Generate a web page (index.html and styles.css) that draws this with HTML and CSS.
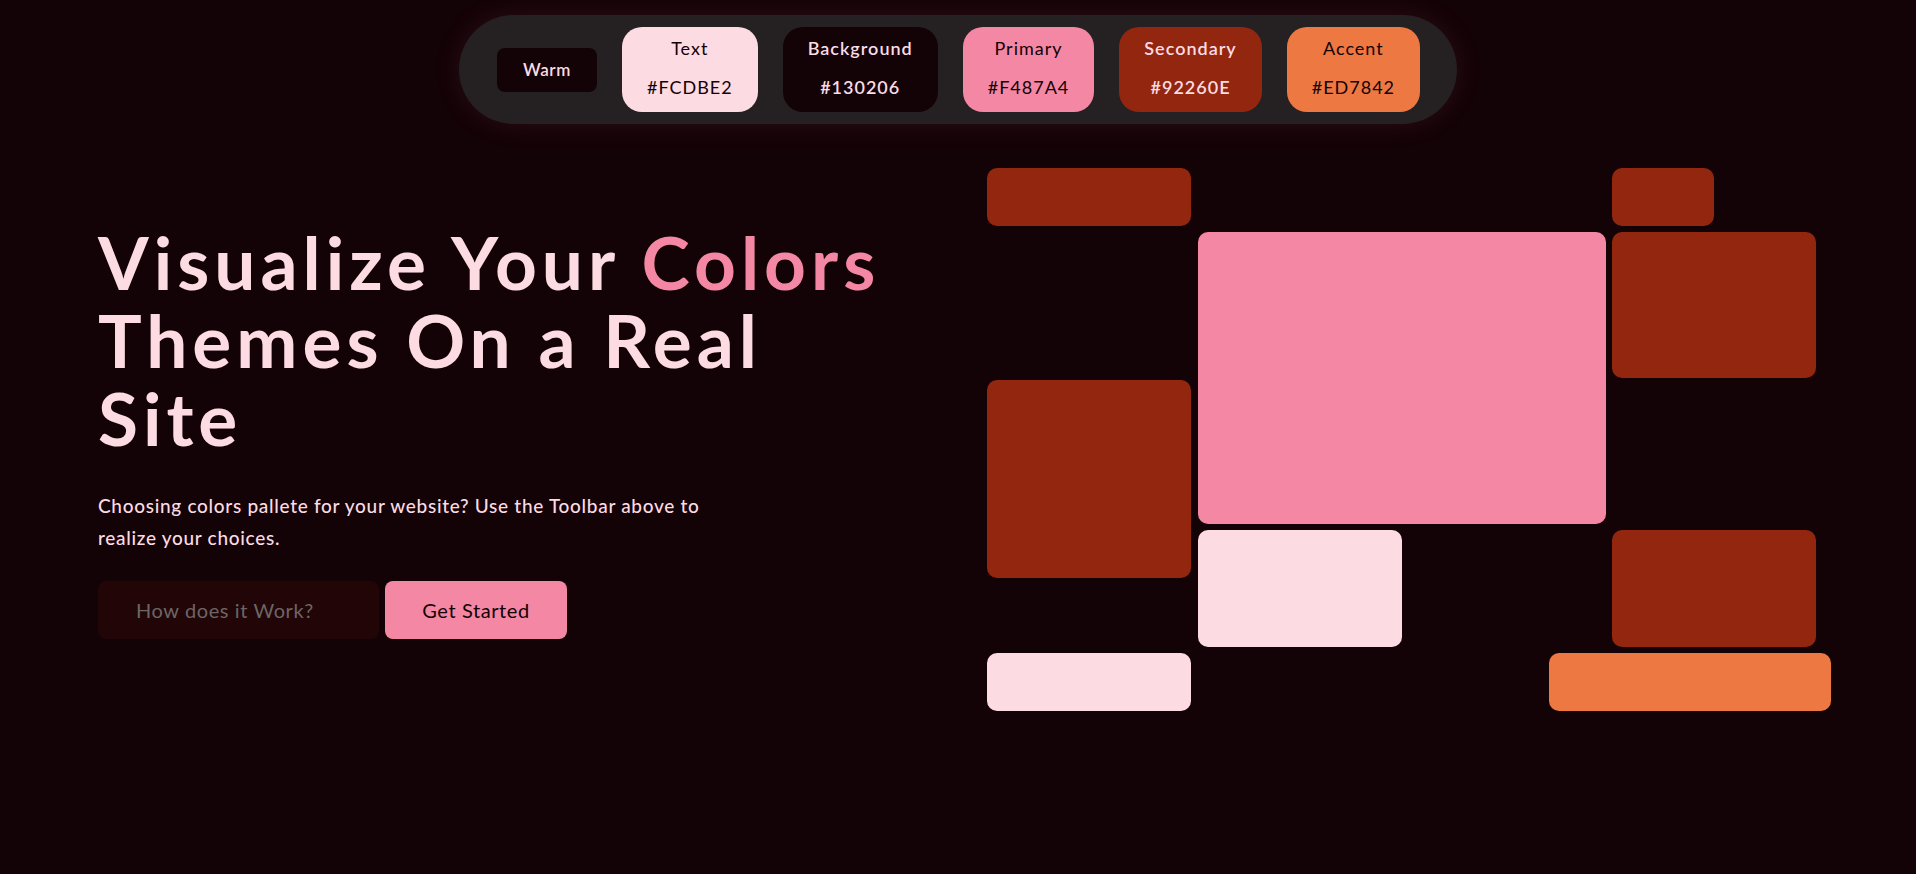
FILE: index.html
```html
<!DOCTYPE html>
<html lang="en">
<head>
<meta charset="utf-8">
<title>Visualize Your Colors</title>
<link rel="stylesheet" href="styles.css">
</head>
<body>
<header class="topbar">
  <nav class="toolbar">
    <button class="theme-btn">Warm</button>
    <div class="swatch sw-text"><span class="sw-label">Text</span><span class="sw-hex">#FCDBE2</span></div>
    <div class="swatch sw-bg"><span class="sw-label">Background</span><span class="sw-hex">#130206</span></div>
    <div class="swatch sw-primary"><span class="sw-label">Primary</span><span class="sw-hex">#F487A4</span></div>
    <div class="swatch sw-secondary"><span class="sw-label">Secondary</span><span class="sw-hex">#92260E</span></div>
    <div class="swatch sw-accent"><span class="sw-label">Accent</span><span class="sw-hex">#ED7842</span></div>
  </nav>
</header>
<main class="hero">
  <section class="intro">
    <h1 class="title">Visualize Your <span class="hl">Colors</span><br>Themes On a Real Site</h1>
    <p class="lead">Choosing colors pallete for your website? Use the Toolbar above to realize your choices.</p>
    <div class="actions">
      <button class="btn btn-ghost">How does it Work?</button>
      <button class="btn btn-primary">Get Started</button>
    </div>
  </section>
  <section class="mosaic">
    <div class="tile sec a1"></div>
    <div class="tile sec a2"></div>
    <div class="tile pri a3"></div>
    <div class="tile sec a4"></div>
    <div class="tile sec a5"></div>
    <div class="tile txt a6"></div>
    <div class="tile sec a7"></div>
    <div class="tile txt a8"></div>
    <div class="tile acc a9"></div>
  </section>
</main>
</body>
</html>
```
FILE: styles.css
```css
* { box-sizing: border-box; }
html, body { margin: 0; padding: 0; }
body {
  background: #130206;
  color: #FCDBE2;
  font-family: Lato, "Noto Sans", sans-serif;
  min-height: 874px;
  overflow: hidden;
}
button { font-family: inherit; border: 0; cursor: pointer; }

.topbar {
  display: flex;
  justify-content: center;
  padding-top: 15px;
}
.toolbar {
  display: flex;
  align-items: center;
  gap: 25px;
  height: 109px;
  padding: 0 37px 0 38px;
  background: #252123;
  border-radius: 55px;
  box-shadow: 0 0 28px rgba(244, 135, 164, 0.10);
}
.theme-btn {
  width: 100px;
  height: 44px;
  border-radius: 8px;
  background: #130206;
  color: #FCDBE2;
  font-size: 17px;
  letter-spacing: 0.5px;
  font-weight: 600;
}
.swatch {
  height: 85px;
  padding: 8px 25px 12px;
  border-radius: 20px;
  display: flex;
  flex-direction: column;
  justify-content: space-between;
  align-items: center;
  font-size: 18px;
  line-height: 26px;
  letter-spacing: 1px;
  white-space: nowrap;
}
.sw-label, .sw-hex { display: block; }
.sw-text { background: #FCDBE2; color: #130206; }
.sw-bg { background: #130206; color: #FCDBE2; font-weight: 600; }
.sw-primary { background: #F487A4; color: #130206; }
.sw-secondary { background: #92260E; color: #FCDBE2; font-weight: 600; }
.sw-accent { background: #ED7842; color: #130206; }

.hero {
  display: flex;
  justify-content: space-between;
  padding: 44px 85px 0 98px;
}
.intro {
  padding-top: 55px;
}
.title {
  margin: 0;
  font-size: 73px;
  line-height: 78px;
  font-weight: 700;
  letter-spacing: 5px;
  color: #FCDBE2;
  max-width: 800px;
}
.hl { color: #F487A4; }
.lead {
  margin: 33px 0 0;
  font-size: 19px;
  line-height: 32px;
  letter-spacing: 0.7px;
  max-width: 625px;
  font-weight: 500;
}
.actions {
  display: flex;
  gap: 6px;
  margin-top: 27px;
}
.btn {
  height: 58px;
  border-radius: 8px;
  font-size: 20px;
  letter-spacing: 0.6px;
}
.btn-ghost {
  width: 281px;
  text-align: left;
  padding-left: 38px;
  background: #220507;
  color: #6c6666;
}
.btn-primary {
  width: 182px;
  background: #F487A4;
  color: #130206;
}

.mosaic {
  display: grid;
  width: 844px;
  height: 543px;
  grid-template-columns: 204px 7px 204px 147px 57px 6px 102px 102px 15px;
  grid-template-rows: 58px 6px 146px 2px 144px 6px 48px 69px 6px 58px;
}
.tile { border-radius: 10px; }
.sec { background: #92260E; }
.pri { background: #F487A4; }
.txt { background: #FCDBE2; }
.acc { background: #ED7842; }
.a1 { grid-area: 1 / 1 / 2 / 2; }
.a2 { grid-area: 1 / 7 / 2 / 8; }
.a3 { grid-area: 3 / 3 / 6 / 6; }
.a4 { grid-area: 3 / 7 / 4 / 9; }
.a5 { grid-area: 5 / 1 / 8 / 2; }
.a6 { grid-area: 7 / 3 / 9 / 4; }
.a7 { grid-area: 7 / 7 / 9 / 9; }
.a8 { grid-area: 10 / 1 / 11 / 2; }
.a9 { grid-area: 10 / 5 / 11 / 10; }
```
